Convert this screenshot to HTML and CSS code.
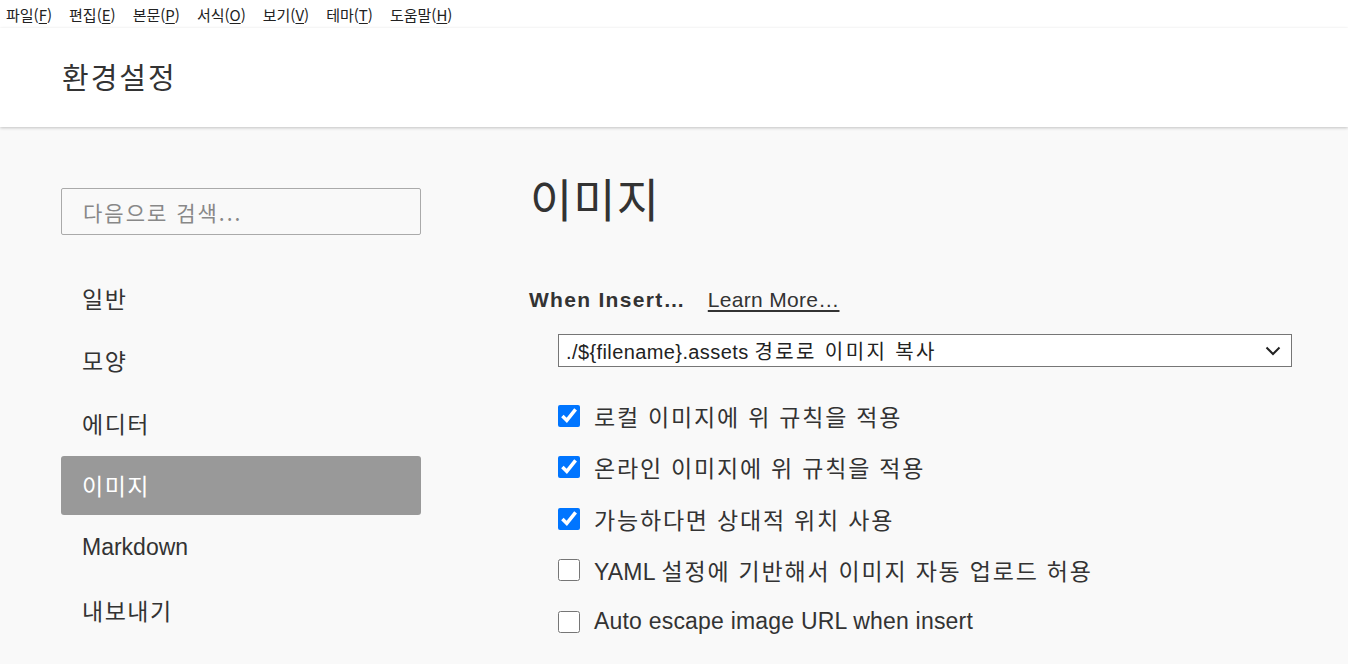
FILE: index.html
```html
<!DOCTYPE html>
<html lang="ko">
<head>
<meta charset="utf-8">
<title>환경설정</title>
<link rel="stylesheet" href="styles.css">
</head>
<body>
<nav class="menubar">
  <span class="menu">파일(<u>F</u>)</span>
  <span class="menu">편집(<u>E</u>)</span>
  <span class="menu">본문(<u>P</u>)</span>
  <span class="menu">서식(<u>O</u>)</span>
  <span class="menu">보기(<u>V</u>)</span>
  <span class="menu">테마(<u>T</u>)</span>
  <span class="menu">도움말(<u>H</u>)</span>
</nav>
<header class="header">
  <h1 class="header-title">환경설정</h1>
</header>
<main class="main">
  <aside class="sidebar">
    <div class="search">다음으로 검색...</div>
    <ul class="nav">
      <li class="nav-item ko">일반</li>
      <li class="nav-item ko">모양</li>
      <li class="nav-item ko">에디터</li>
      <li class="nav-item ko active">이미지</li>
      <li class="nav-item">Markdown</li>
      <li class="nav-item ko">내보내기</li>
    </ul>
  </aside>
  <section class="content">
    <h2 class="page-title">이미지</h2>
    <div class="insert-row">
      <span class="insert-label">When Insert…</span>
      <a class="learn-more">Learn More…</a>
    </div>
    <div class="options">
      <div class="select">
        <span class="select-text">./${filename}.assets <span class="ko-sel">경로로 이미지 복사</span></span>
        <svg class="chevron" width="16" height="10" viewBox="0 0 16 10"><path d="M1.5 1.5 L8 8 L14.5 1.5" fill="none" stroke="#222" stroke-width="2"/></svg>
      </div>
      <label class="check-row"><input type="checkbox" class="check" checked><span class="ko-label">로컬 이미지에 위 규칙을 적용</span></label>
      <label class="check-row"><input type="checkbox" class="check" checked><span class="ko-label">온라인 이미지에 위 규칙을 적용</span></label>
      <label class="check-row"><input type="checkbox" class="check" checked><span class="ko-label">가능하다면 상대적 위치 사용</span></label>
      <label class="check-row"><input type="checkbox" class="check"><span>YAML <span class="ko-label">설정에 기반해서 이미지 자동 업로드 허용</span></span></label>
      <label class="check-row"><input type="checkbox" class="check"><span>Auto escape image URL when insert</span></label>
    </div>
  </section>
</main>
</body>
</html>
```

FILE: styles.css
```css
* { box-sizing: border-box; }
html, body {
  margin: 0;
  padding: 0;
  background: #f9f9f9;
  color: #333;
  font-family: "Liberation Sans", "Noto Sans CJK KR", Arial, sans-serif;
  height: 664px;
  overflow: hidden;
}
.menubar {
  height: 28px;
  background: #fff;
  display: flex;
  align-items: center;
  padding-left: 6px;
  gap: 17px;
  font-family: "Noto Sans CJK KR", sans-serif;
  font-size: 15px;
  color: #222;
}
.menu u { text-underline-offset: 2px; }
.header {
  height: 99px;
  background: #fff;
  box-shadow: 0 1px 3px rgba(0,0,0,0.22);
  display: flex;
  align-items: center;
  padding-left: 62px;
  position: relative;
  z-index: 1;
}
.header-title {
  margin: 0;
  font-family: "Noto Sans CJK KR", sans-serif;
  font-weight: 400;
  font-size: 29px;
  letter-spacing: 2px;
  line-height: 1;
  color: #333;
  padding-bottom: 2px;
}
.main {
  display: flex;
}
.sidebar {
  width: 360px;
  margin-left: 61px;
  padding-top: 61px;
  flex-shrink: 0;
}
.search {
  height: 47px;
  border: 1px solid #aaa;
  border-radius: 2px;
  background: #f9f9f9;
  padding-left: 21px;
  display: flex;
  align-items: center;
  font-family: "Noto Sans CJK KR", sans-serif;
  font-size: 21px;
  letter-spacing: 2px;
  color: #888;
}
.nav {
  list-style: none;
  margin: 33px 0 0;
  padding: 0;
  display: flex;
  flex-direction: column;
  gap: 3.5px;
}
.nav-item {
  height: 59px;
  display: flex;
  align-items: center;
  padding-left: 21px;
  font-size: 23px;
  color: #333;
  border-radius: 3px;
}
.nav-item.ko { letter-spacing: 1.5px; }
.nav-item.active {
  background: #999;
  color: #fff;
}
.content {
  flex: 1;
  margin-left: 108px;
  margin-right: 56px;
  padding-top: 42px;
}
.page-title {
  margin: 0 0 0 1px;
  font-family: "Noto Sans CJK KR", sans-serif;
  font-weight: 400;
  font-size: 46px;
  line-height: 56px;
  letter-spacing: 1px;
  color: #333;
}
.insert-row {
  margin-top: 58px;
  display: flex;
  align-items: center;
  gap: 22px;
  height: 34px;
}
.insert-label {
  font-weight: 700;
  font-size: 21px;
  letter-spacing: 1.3px;
  color: #333;
}
.learn-more {
  font-size: 21px;
  letter-spacing: 0.3px;
  color: #333;
  text-decoration: underline;
  text-underline-offset: 3px;
}
.options {
  margin-left: 29px;
  margin-top: 17px;
}
.select {
  height: 33px;
  border: 1px solid #767676;
  background: #fff;
  display: flex;
  align-items: center;
  justify-content: space-between;
  padding: 0 8px 0 7px;
  font-size: 20px;
  letter-spacing: 0.4px;
  color: #222;
}
.ko-sel { letter-spacing: 2.4px; }
.chevron { margin-right: 2px; }
.options .select { margin-bottom: 23px; }
.check-row {
  display: flex;
  align-items: center;
  gap: 14px;
  height: 51.5px;
  font-size: 23px;
  letter-spacing: 0.2px;
  color: #333;
}
.ko-label { letter-spacing: 1.8px; }
.check {
  width: 22px;
  height: 22px;
  margin: 0;
  accent-color: #0075ff;
}
```
